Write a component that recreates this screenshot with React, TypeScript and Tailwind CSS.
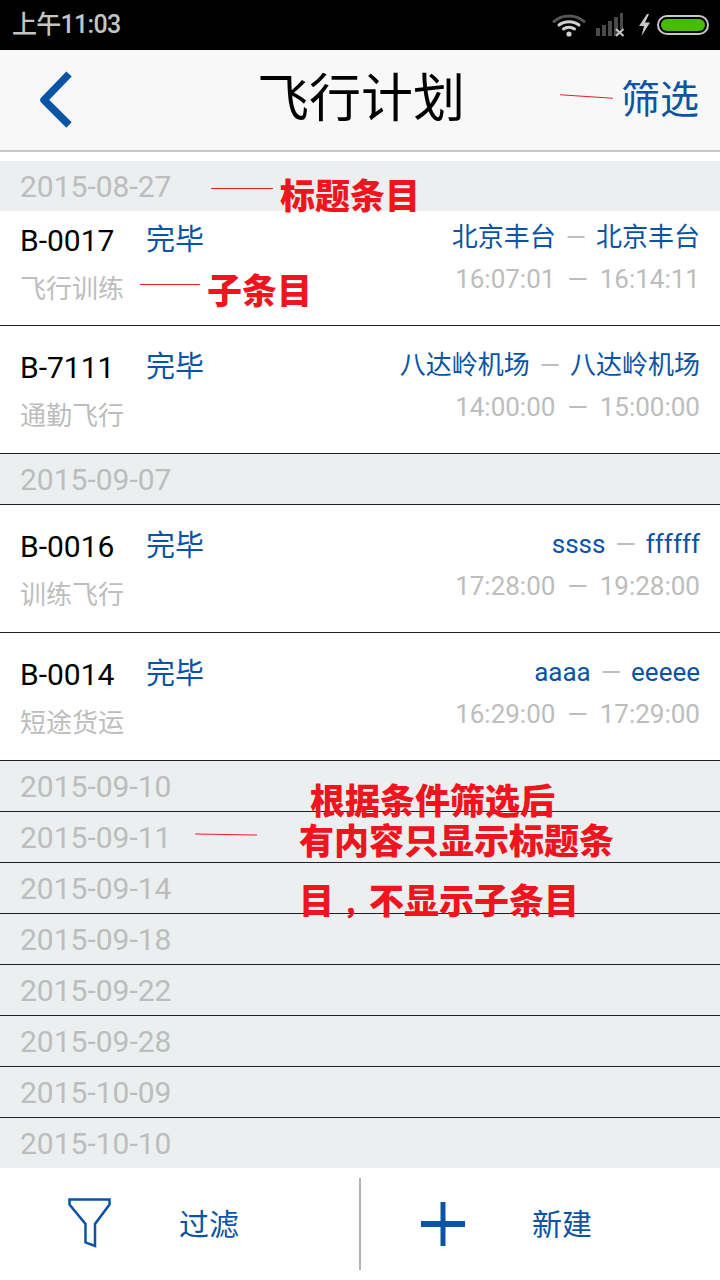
import type { ReactNode } from 'react';

const DateRow = ({ date, last }: { date: string; last?: boolean }) => (
  <div className={`${last ? 'h-[50px]' : 'h-[51px] border-b border-[#222]'} bg-[#ebeff0] pl-[20px] text-[30px] leading-[52px] text-[#bdbdbd]`}>
    {date}
  </div>
);

const FlightRow = ({ code, kind, from, to, dep, arr, first }: { code: string; kind: string; from: string; to: string; dep: string; arr: string; first?: boolean }) => (
  <div className={`${first ? 'h-[115px]' : 'h-[128px]'} border-b border-[#222] bg-white pl-[20px] pr-[20px] flex justify-between`}>
    <div className={first ? 'pt-[9px]' : 'pt-[21px]'}>
      <div className="flex items-center h-[40px]">
        <span className="text-[30px] text-black w-[126px]">{code}</span>
        <span className="pt-[2px] text-[29px] text-[#0a53a5]">完毕</span>
      </div>
      <div className="mt-[9px] text-[26px] leading-[40px] text-[#bdbdbd]">{kind}</div>
    </div>
    <div className={`text-right ${first ? 'pt-[6px]' : 'pt-[19px]'}`}>
      <div className="flex justify-end gap-[10px] text-[26px] leading-[40px] text-[#0a53a5]">
        <span>{from}</span>
        <span className="text-[#bdbdbd]">—</span>
        <span>{to}</span>
      </div>
      <div className="mt-[2px] flex justify-end gap-[12px] text-[26px] leading-[40px] text-[#bdbdbd]">
        <span>{dep}</span>
        <span>—</span>
        <span>{arr}</span>
      </div>
    </div>
  </div>
);

const Note = ({ className, children }: { className: string; children: ReactNode }) => (
  <div className={`absolute whitespace-nowrap font-black text-[#f0141e] text-[35px] leading-[40px] ${className}`}>{children}</div>
);

const Line = ({ className }: { className: string }) => <div className={`absolute h-px bg-[#ee1c25] ${className}`} />;

export default function App() {
  return (
    <div
      className="relative w-[720px] h-[1280px] overflow-hidden bg-white flex flex-col"
      style={{ fontFamily: 'Roboto, "Noto Sans CJK SC", sans-serif' }}
    >
      {/* status bar */}
      <div className="h-[50px] shrink-0 bg-black flex items-center justify-between pl-[12px] pr-[11px]">
        <span className="text-[25px] font-medium text-[#c4c4c4] tracking-[-0.7px]">上午11:03</span>
        <div className="flex items-center">
          <svg width="34" height="26" viewBox="0 0 34 26" fill="none" strokeLinecap="round">
            <path d="M2 9.500C10 2 24 2 32 9.500" stroke="#555" strokeWidth="3" />
            <path d="M7 13C12.500 8.500 21.500 8.500 27 13" stroke="#d0d0d0" strokeWidth="3" />
            <path d="M11.500 17C14.500 14.500 19.500 14.500 22.500 17" stroke="#d0d0d0" strokeWidth="3" />
            <circle cx="17" cy="22" r="2.600" fill="#d0d0d0" />
          </svg>
          <svg className="ml-[10px]" width="30" height="26" viewBox="0 0 30 26">
            <rect x="0" y="16" width="4" height="8" fill="#4a4a4a" />
            <rect x="6" y="13" width="4" height="11" fill="#4a4a4a" />
            <rect x="12" y="9" width="4" height="15" fill="#4a4a4a" />
            <rect x="18" y="5" width="4" height="19" fill="#4a4a4a" />
            <rect x="24" y="1" width="3" height="16" fill="#4a4a4a" />
            <path d="M20 17L27.500 24M27.500 17L20 24" stroke="#c8c8c8" strokeWidth="2" />
          </svg>
          <svg className="ml-[13px]" width="12" height="22" viewBox="0 0 12 22">
            <path d="M8 0L0 12H5L2.500 22L11 8.500H6L10 0Z" fill="#c8c8c8" />
          </svg>
          <div className="ml-[6px] w-[52px] h-[20px] rounded-full border-[2px] border-[#c8c8c8] p-[2px]">
            <div className="h-full rounded-full bg-[#45bd00]" />
          </div>
        </div>
      </div>

      {/* title bar */}
      <div className="h-[102px] shrink-0 bg-[#f8f8f8] border-b-2 border-[#c8c8cc] flex items-center justify-between pl-[38px] pr-[21px]">
        <svg width="36" height="60" viewBox="0 0 36 60" fill="none">
          <path d="M31 4L6 30L31 55" stroke="#0a53a5" strokeWidth="7.500" strokeLinejoin="round" />
        </svg>
        <span className="text-[52px] leading-none text-black ml-[27px]">飞行计划</span>
        <span className="text-[39px] leading-none text-[#0a53a5]">筛选</span>
      </div>

      {/* list */}
      <div className="flex-1 pt-[9px] flex flex-col">
        <DateRow date="2015-08-27" last />
        <FlightRow first code="B-0017" kind="飞行训练" from="北京丰台" to="北京丰台" dep="16:07:01" arr="16:14:11" />
        <FlightRow code="B-7111" kind="通勤飞行" from="八达岭机场" to="八达岭机场" dep="14:00:00" arr="15:00:00" />
        <DateRow date="2015-09-07" />
        <FlightRow code="B-0016" kind="训练飞行" from="ssss" to="ffffff" dep="17:28:00" arr="19:28:00" />
        <FlightRow code="B-0014" kind="短途货运" from="aaaa" to="eeeee" dep="16:29:00" arr="17:29:00" />
        <DateRow date="2015-09-10" />
        <DateRow date="2015-09-11" />
        <DateRow date="2015-09-14" />
        <DateRow date="2015-09-18" />
        <DateRow date="2015-09-22" />
        <DateRow date="2015-09-28" />
        <DateRow date="2015-10-09" />
        <DateRow date="2015-10-10" last />
      </div>

      {/* bottom bar */}
      <div className="h-[112px] shrink-0 bg-white flex items-center">
        <div className="w-[361px] h-[92px] border-r-2 border-[#b0b0b0] flex items-center pl-[68px]">
          <svg className="-mt-[3px]" width="44" height="50" viewBox="0 0 44 50" fill="none">
            <path d="M1.500 1.500H41.500V6.500L27 26V48L17.500 44.500V26L1.500 6.500Z" stroke="#0a53a5" strokeWidth="2.500" />
          </svg>
          <span className="ml-[67px] text-[30px] text-[#0a53a5]">过滤</span>
        </div>
        <div className="flex items-center pl-[60px]">
          <svg width="44" height="44" viewBox="0 0 44 44">
            <rect x="0" y="19" width="44" height="6" fill="#0a53a5" />
            <rect x="19.500" y="0" width="5" height="44" fill="#0a53a5" />
          </svg>
          <span className="ml-[67px] text-[30px] text-[#0a53a5]">新建</span>
        </div>
      </div>

      {/* red annotations drawn over the screen */}
      <Line className="left-[560px] top-[96px] w-[53px] rotate-[4deg]" />
      <Line className="left-[211px] top-[188px] w-[62px]" />
      <Note className="left-[280px] top-[178px]">标题条目</Note>
      <Line className="left-[140px] top-[284px] w-[60px]" />
      <Note className="left-[207px] top-[273px]">子条目</Note>
      <Line className="left-[195px] top-[834px] w-[62px] rotate-[1deg]" />
      <Note className="left-[310px] top-[783px]">根据条件筛选后</Note>
      <Note className="left-[299px] top-[823px]">有内容只显示标题条</Note>
      <Note className="left-[299px] top-[883px]">
        目<span className="pl-[9px] text-[26px]">，</span>不显示子条目
      </Note>
    </div>
  );
}
